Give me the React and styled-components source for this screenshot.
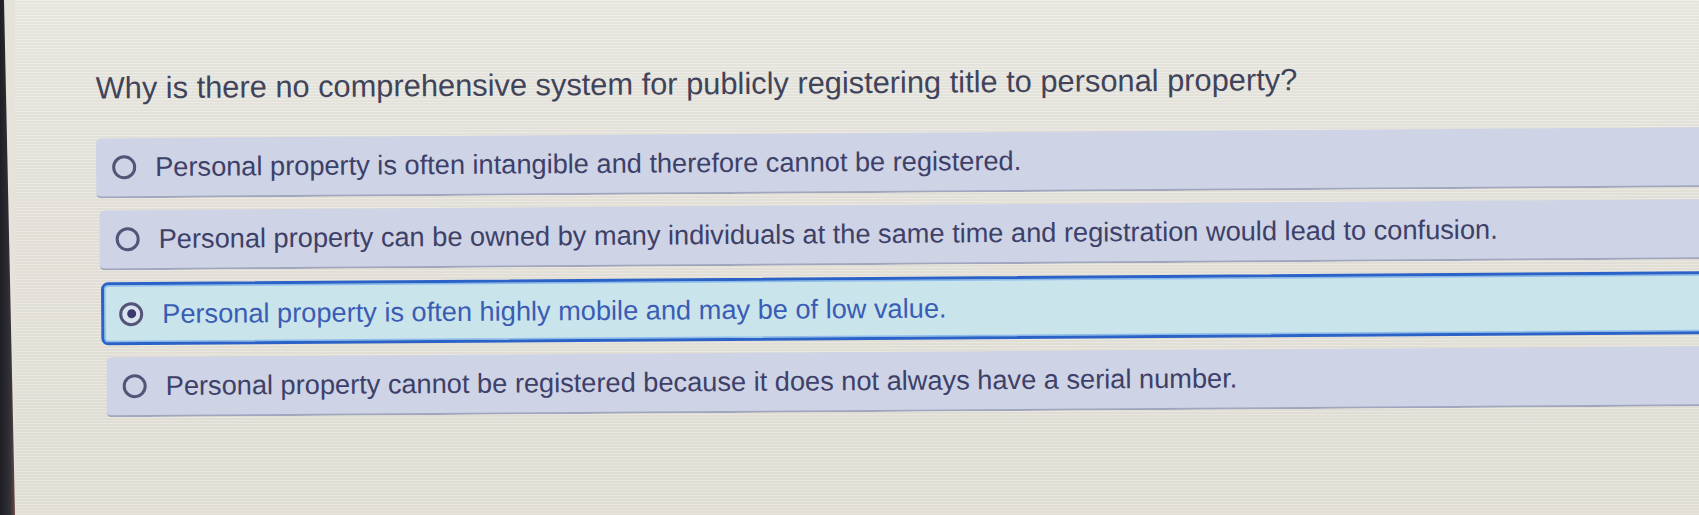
import React from 'react'
import styled, { createGlobalStyle } from 'styled-components'

const options = [
  { id: 1, text: 'Personal property is often intangible and therefore cannot be registered.', indent: 0 },
  { id: 2, text: 'Personal property can be owned by many individuals at the same time and registration would lead to confusion.', indent: 3 },
  { id: 3, text: 'Personal property is often highly mobile and may be of low value.', indent: 4, selected: true },
  { id: 4, text: 'Personal property cannot be registered because it does not always have a serial number.', indent: 9 },
]

function App() {
  return (
    <>
      <GlobalStyle />
      <Screen>
        <Bezel />
        <Page>
          <Content>
            <Question>Why is there no comprehensive system for publicly registering title to personal property?</Question>
            <OptionList>
              {
                options.map(option => {
                  return <OptionRow key={option.id} $indent={option.indent} $selected={option.selected}>
                    <Radio $selected={option.selected} />
                    <OptionText $selected={option.selected}>{option.text}</OptionText>
                  </OptionRow>
                })
              }
            </OptionList>
          </Content>
        </Page>
      </Screen>
    </>
  )
}

const GlobalStyle = createGlobalStyle`
  html, body {
    margin: 0;
    padding: 0;
    background: #e4e2d9;
    font-family: "Liberation Sans", Arial, sans-serif;
  }
`

const Screen = styled.div`
  display: flex;
  width: 100vw;
  height: 515px;
  overflow: hidden;
  background: #e4e2d9;
`

const Bezel = styled.div`
  flex: none;
  width: 15px;
  background: linear-gradient(90deg, #1f1e24 0%, #34323a 70%, #6b4a42 100%);
  clip-path: polygon(0 0, 4px 0, 15px 100%, 0 100%);
`

const Page = styled.div`
  flex: 1;
  min-width: 0;
  background:
    repeating-linear-gradient(180deg, rgba(255, 255, 255, 0.22) 0 1px, rgba(0, 0, 0, 0.015) 1px 3px),
    linear-gradient(180deg, #e9e8e1 0%, #e4e2d9 40%, #e2e0d6 100%);
`

const Content = styled.div`
  padding: 71px 0 0 80px;
  transform: rotate(-0.4deg);
  transform-origin: 0 0;
`

const Question = styled.h1`
  margin: 0 0 32px;
  font-size: 30.8px;
  font-weight: 400;
  line-height: 36px;
  color: #404359;
  white-space: nowrap;
`

const OptionList = styled.div`
  display: flex;
  flex-direction: column;
  gap: 12px;
`

const OptionRow = styled.div`
  display: flex;
  align-items: center;
  gap: 19px;
  box-sizing: border-box;
  height: ${p => p.$selected ? 63 : 60}px;
  margin-left: ${p => p.$indent}px;
  margin-right: -60px;
  padding-left: ${p => p.$selected ? 15 : 16}px;
  border-radius: 5px;
  background: ${p => p.$selected ? '#cae4eb' : '#ced3e5'};
  border-bottom: 2px solid #a0a6be;

  ${p => p.$selected && `
    border: 3px solid #2a62c8;
    box-shadow: inset 0 0 0 1.5px #8cbcec;
    border-radius: 7px;
  `}
`

const Radio = styled.span`
  position: relative;
  flex: none;
  width: 24px;
  height: 24px;
  box-sizing: border-box;
  border-radius: 50%;
  border: 3px solid #535578;
  background: ${p => p.$selected ? '#d8e4ee' : 'transparent'};

  &::after {
    content: '';
    display: ${p => p.$selected ? 'block' : 'none'};
    position: absolute;
    left: 50%;
    top: 50%;
    width: 9px;
    height: 9px;
    margin: -4.5px 0 0 -4.5px;
    border-radius: 50%;
    background: #3b3a6e;
  }
`

const OptionText = styled.span`
  font-size: 27.2px;
  line-height: 32px;
  white-space: nowrap;
  color: ${p => p.$selected ? '#3a5cb5' : '#3d4068'};
`

export default App
